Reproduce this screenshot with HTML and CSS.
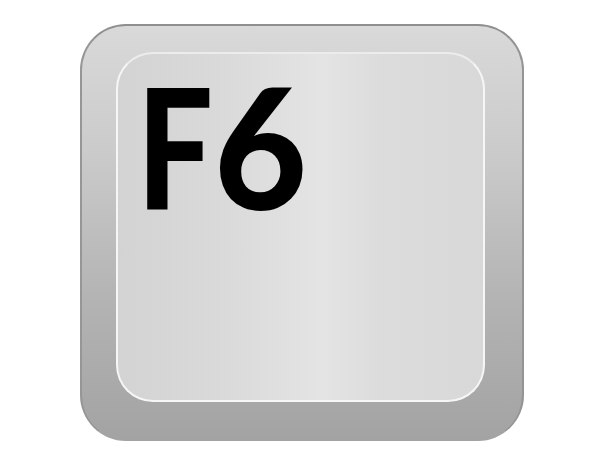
FILE: index.html
```html
<!DOCTYPE html>
<html lang="en">
<head>
<meta charset="utf-8">
<title>F6 key</title>
<link rel="stylesheet" href="styles.css">
</head>
<body>
<main class="page">
  <div class="key">
    <div class="cap">
      <div class="label"><span class="letter">F</span><span class="digit">6</span></div>
    </div>
  </div>
</main>
</body>
</html>
```
FILE: styles.css
```css
html, body {
  margin: 0;
  padding: 0;
  background: #fff;
}
.page {
  width: 600px;
  height: 450px;
  overflow: hidden;
  box-sizing: border-box;
  padding: 24px 0 0 80px;
}
.key {
  box-sizing: border-box;
  width: 444px;
  height: 417px;
  padding: 26px 37px 38px 34px;
  border-radius: 46px;
  border-style: solid;
  border-width: 2px 2px 1px 2px;
  border-color: #8f8f8f #949494 #a3a3a3 #969696;
  background: linear-gradient(to bottom, #d9d9d9 0%, #cbcbcb 30%, #b4b4b4 65%, #a3a3a3 100%);
}
.cap {
  box-sizing: border-box;
  height: 100%;
  padding: 17px 0 0 19px;
  border: 2px solid #f6f6f6;
  border-top-color: #ececec;
  border-radius: 37px;
  background: linear-gradient(to right, #d3d3d3 0%, #dadada 30%, #e4e4e4 56%, #dcdcdc 72%, #d8d8d8 100%);
}
.label {
  display: flex;
  font-family: "Lato", "Liberation Sans", sans-serif;
  font-weight: 900;
  font-size: 168px;
  line-height: 149px;
  color: #000;
}
.letter {
  display: block;
  margin-right: -18px;
  transform: scaleX(0.8);
  transform-origin: left center;
}
.digit {
  display: block;
  transform: scaleX(0.955);
  transform-origin: left center;
}
```
